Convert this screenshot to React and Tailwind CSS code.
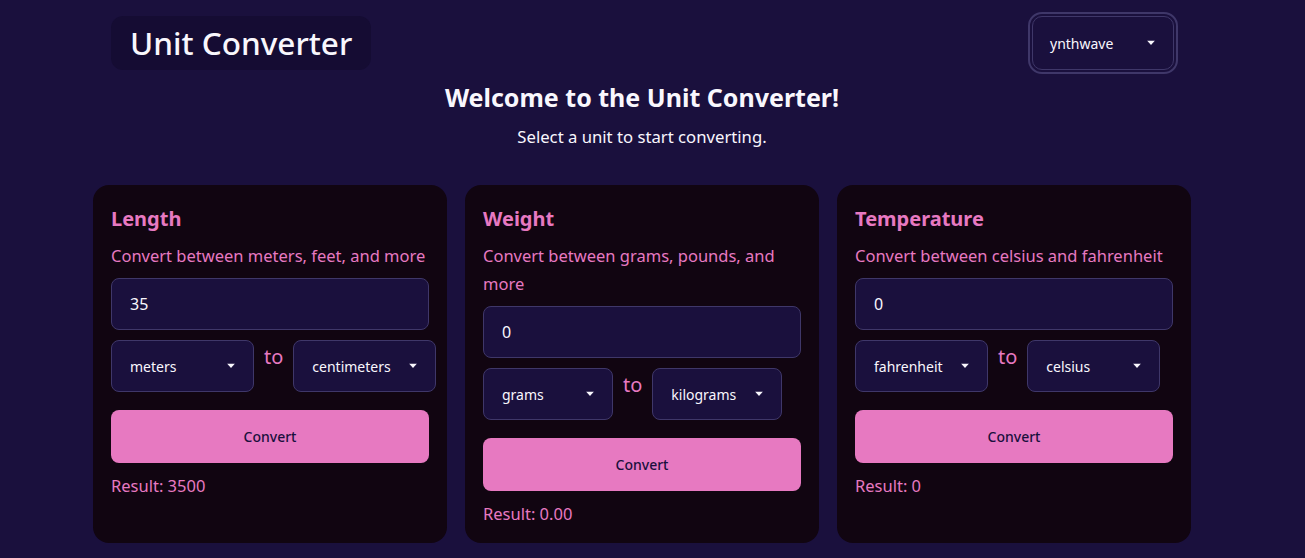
import { useState } from 'react';

const Arrow = () => (
    <svg width="8" height="5" viewBox="0 0 8 5" className="absolute right-[18px] top-1/2 -translate-y-1/2 pointer-events-none">
        <path d="M0 0 L8 0 L4 4.5 Z" fill="#f9f7fd" />
    </svg>
);

const Select = ({ value, width }) => (
    <div className={`relative h-[52px] ${width} shrink-0 rounded-lg border border-[#3f3769] bg-[#1a103d] text-[14px] text-[#f9f7fd] flex items-center pl-[18px]`}>
        {value}
        <Arrow />
    </div>
);

const cards = [
    { title: 'Length', desc: 'Convert between meters, feet, and more', value: '35', from: 'meters', to: 'centimeters', w: 'w-[143px]', result: '3500' },
    { title: 'Weight', desc: 'Convert between grams, pounds, and more', value: '0', from: 'grams', to: 'kilograms', w: 'w-[130px]', result: '0.00' },
    { title: 'Temperature', desc: 'Convert between celsius and fahrenheit', value: '0', from: 'fahrenheit', to: 'celsius', w: 'w-[133px]', result: '0' },
];

const Card = ({ card }) => {
    const [value, setValue] = useState(card.value);
    return (
        <div className="bg-[#110511] rounded-2xl px-[18px] pt-[20px] pb-[17px]">
            <h2 className="text-[20px] leading-[28px] font-bold text-[#e779c1]">{card.title}</h2>
            <p className="mt-[9px] text-[16.5px] leading-[28px] text-[#e779c1]">{card.desc}</p>
            <input
                className="mt-[8px] w-full h-[52px] rounded-lg border border-[#3f3769] bg-[#1a103d] px-[18px] text-[16px] text-[#f9f7fd] outline-none"
                value={value}
                onChange={(e) => setValue(e.target.value)}
            />
            <div className="mt-[10px] flex gap-[10px] items-start">
                <Select value={card.from} width={card.w} />
                <span className="text-[20px] leading-[24px] mt-[5px] text-[#e779c1]">to</span>
                <Select value={card.to} width={card.w} />
            </div>
            <button className="mt-[18px] w-full h-[53px] rounded-lg bg-[#e779c1] text-[14px] font-medium text-[#1a103d]">
                Convert
            </button>
            <p className="mt-[11px] text-[16.5px] leading-[24px] text-[#e779c1]">Result: {card.result}</p>
        </div>
    );
};

export default function App() {
    return (
        <div className="min-h-screen bg-[#1a103d] text-[#f9f7fd]" style={{ fontFamily: "'Noto Sans', sans-serif" }}>
            <div className="w-[1098px] ml-[93px]">
                <div className="flex justify-between items-start px-[18px] pt-[16px]">
                    <div className="h-[54px] px-[19px] flex items-center rounded-xl bg-[#150c33] text-[31.5px] font-medium">
                        Unit Converter
                    </div>
                    <div className="mr-[-1px] relative w-[142px] h-[54px] rounded-[10px] border border-[#3f3769] outline-2 outline-offset-[2px] outline-[#3f3769] flex items-center pl-[17px] text-[14px]">
                        ynthwave
                        <Arrow />
                    </div>
                </div>
                <div className="mt-[11px] text-center">
                    <h1 className="text-[25px] leading-[32px] font-bold">Welcome to the Unit Converter!</h1>
                    <p className="mt-[12px] text-[16.7px] leading-[24px]">Select a unit to start converting.</p>
                </div>
                <div className="mt-[36px] grid grid-cols-3 gap-[18px]">
                    {cards.map((c) => (
                        <Card key={c.title} card={c} />
                    ))}
                </div>
            </div>
        </div>
    );
}
